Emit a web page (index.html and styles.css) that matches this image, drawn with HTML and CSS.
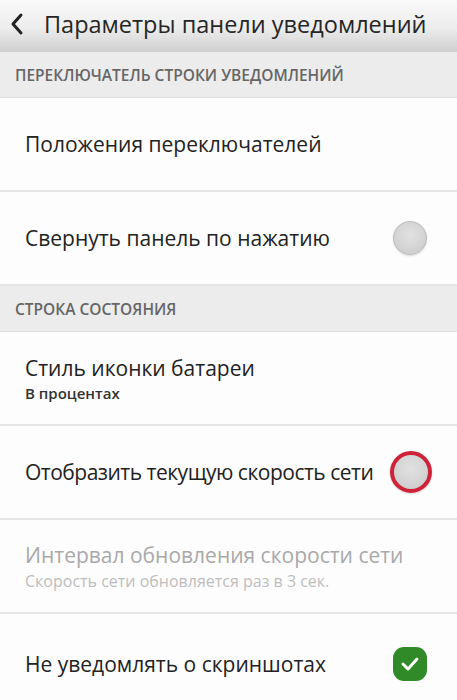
FILE: index.html
```html
<!DOCTYPE html>
<html>
<head>
  <link rel="stylesheet" href="styles.css">
</head>
<body>
  <div class="topbar">
    <svg class="back" width="14" height="24" viewBox="0 0 14 24">
      <path d="M11 3 L3 12 L11 21" fill="none" stroke="#222" stroke-width="3" stroke-linecap="round" stroke-linejoin="round"/>
    </svg>
    <h1 class="title">Параметры панели уведомлений</h1>
  </div>

  <div class="section-title">Переключатель строки уведомлений</div>

  <div class="item">
    <div class="item-text">
      <div class="item-title">Положения переключателей</div>
    </div>
  </div>

  <div class="item">
    <div class="item-text">
      <div class="item-title">Свернуть панель по нажатию</div>
    </div>
    <div class="toggle"></div>
  </div>

  <div class="section-title">Строка состояния</div>

  <div class="item">
    <div class="item-text">
      <div class="item-title">Стиль иконки батареи</div>
      <div class="item-sub">В процентах</div>
    </div>
  </div>

  <div class="item">
    <div class="item-text">
      <div class="item-title tight">Отобразить текущую скорость сети</div>
    </div>
    <div class="toggle marked"></div>
  </div>

  <div class="item disabled">
    <div class="item-text">
      <div class="item-title">Интервал обновления скорости сети</div>
      <div class="item-sub">Скорость сети обновляется раз в 3 сек.</div>
    </div>
  </div>

  <div class="item last">
    <div class="item-text">
      <div class="item-title">Не уведомлять о скриншотах</div>
    </div>
    <div class="check">
      <svg width="20" height="16" viewBox="0 0 20 16">
        <path d="M3 8 L8 13 L17 3" fill="none" stroke="#fff" stroke-width="3" stroke-linecap="round" stroke-linejoin="round"/>
      </svg>
    </div>
  </div>
</body>
</html>
```

FILE: styles.css
```css
/* Экран настроек панели уведомлений */
body {
  margin: 0;
  background: #fbfbfb;
  font-family: "Open Sans", "Noto Sans", sans-serif;
  color: #222;
}

.topbar {
  height: 52px;
  display: flex;
  align-items: center;
  gap: 20px;
  padding-left: 10px;
  padding-bottom: 4px;
  box-sizing: border-box;
  background: linear-gradient(#fafafa 0%, #ececec 55%, #cfcfcf 100%);
}

.title {
  margin: 0;
  font-size: 23.5px;
  font-weight: 400;
  color: #262626;
}

.section-title {
  height: 45px;
  display: flex;
  align-items: center;
  padding-left: 15px;
  background: #ececec;
  font-size: 15.5px;
  font-weight: 600;
  letter-spacing: 0;
  text-transform: uppercase;
  color: #666;
  border-bottom: 1px solid #dedede;
}

.item {
  height: 94px;
  display: flex;
  align-items: center;
  padding: 0 25px;
  box-sizing: border-box;
  background: #fdfdfd;
  border-bottom: 2px solid #e6e6e6;
}

.item.last {
  border-bottom: none;
  padding-top: 6px;
}

.item-text {
  flex: 1;
  min-width: 0;
}

.item-title {
  font-size: 21px;
  color: #222;
  white-space: nowrap;
}

.item-title.tight {
  letter-spacing: -0.5px;
}

.item-sub {
  margin-top: 1px;
  font-size: 15px;
  font-weight: 600;
  color: #333;
}

.disabled .item-title {
  color: #a9a9a9;
}

.disabled .item-sub {
  font-weight: 400;
  font-size: 16px;
  color: #bdbdbd;
}

.toggle {
  width: 32px;
  height: 32px;
  margin-right: 5px;
  border-radius: 50%;
  background: radial-gradient(circle at 50% 40%, #e2e2e2, #c8c8c8);
  border: 1px solid #bcbcbc;
  box-shadow: 0 1px 2px rgba(0, 0, 0, 0.15);
}

.toggle.marked {
  margin-left: 4px;
  border: 4px solid #cf2239;
  width: 34px;
  height: 34px;
  margin-right: 0;
}

.check {
  width: 34px;
  height: 34px;
  margin-right: 5px;
  border-radius: 11px;
  background: #2f8a27;
  display: flex;
  align-items: center;
  justify-content: center;
}
```
